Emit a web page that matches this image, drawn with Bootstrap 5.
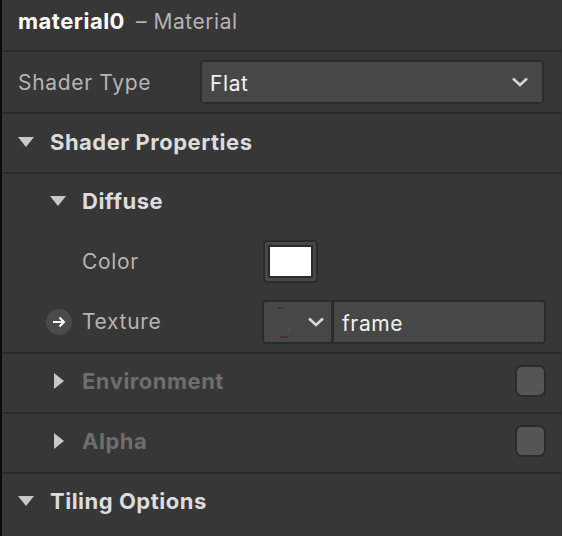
<!DOCTYPE html>
<html lang="en">
<head>
<meta charset="utf-8">
<title>Material</title>
<link rel="stylesheet" href="https://cdn.jsdelivr.net/npm/bootstrap@5.3.0/dist/css/bootstrap.min.css">
<style>
html, body { margin: 0; height: 536px; overflow: hidden; background: #373737; }
body { font-family: Inter, "Noto Sans", sans-serif; font-size: 21px; color: #bcbcbc; }
.panel { height: 536px; border-left: 2px solid #0b0b0b; border-right: 1px solid #2f2f2f; background: #373737; }
.sect { border-bottom: 2px solid #2b2b2b; }
.head-row { height: 52px; padding: 0 0 8px 16px; }
.row-top { height: 58px; padding-bottom: 4px; }
.row-a { height: 60px; }
.row-s { height: 62px; }
.row-b { height: 60px; padding-bottom: 2px; }
.row-c { height: 60px; padding-bottom: 4px; }
.row-d { height: 60px; padding-bottom: 6px; }
.obj-name { font-weight: 700; color: #fff; letter-spacing: .5px; font-size: 22px; line-height: 1; }
.obj-kind { color: #b4b4b4; margin-left: 11px; letter-spacing: .55px; font-size: 21px; line-height: 1; }
.lbl { letter-spacing: .68px; color: #b4b4b4; line-height: 1; }
.lift { margin-bottom: 2px; }
.ttl { font-weight: 700; letter-spacing: .5px; font-size: 22px; color: #dcdcdc; line-height: 1; }
.ttl-off { color: #6e6e6e; }
.caret-slot { width: 32px; flex: none; }
.pad-1 { padding-left: 16px; }
.pad-2 { padding-left: 48px; }
.tri-down { display: block; width: 0; height: 0; border-left: 8px solid transparent; border-right: 8px solid transparent; border-top: 10px solid #c8c8c8; }
.tri-right { display: block; margin-left: 4px; width: 0; height: 0; border-top: 8px solid transparent; border-bottom: 8px solid transparent; border-left: 10px solid #c8c8c8; }
.field { height: 44px; background: #474747; border: 2px solid #2b2b2b; border-radius: 4px; color: #f2f2f2; letter-spacing: .6px; }
.type-lbl { width: 182px; flex: none; }
.shader-box { width: 344px; padding: 0 13px 0 8px; }
.shader-val { padding-top: 3px; line-height: 1; }
.swatch-box { width: 55px; height: 43px; background: #474747; border: 2px solid #2b2b2b; border-radius: 4px; padding: 3px; margin: 0 243px 2px 0; }
.swatch-fill { height: 100%; background: #fff; border: 2px solid #2b2b2b; }
.tex-wrap { width: 284px; margin-right: 15px; }
.tex-thumb { width: 70px; height: 100%; border-right: 3px solid #2b2b2b; flex: none; padding: 0 6px 0 8px; }
.tex-name { padding: 2px 0 0 8px; line-height: 1; }
.pin { width: 26px; height: 26px; border-radius: 50%; background: #4b4b4b; left: 44px; top: 50%; transform: translateY(-50%); }
.tick { width: 31px; height: 32px; background: #555; border: 2px solid #2b2b2b; border-radius: 7px; margin-right: 15px; }
</style>
</head>
<body>
<div class="panel d-flex flex-column">
  <div class="sect head-row d-flex align-items-center">
    <div class="d-flex align-items-baseline">
      <span class="obj-name">material0</span><span class="obj-kind">– Material</span>
    </div>
  </div>
  <div class="sect row-s d-flex align-items-center pad-1">
    <span class="lbl type-lbl">Shader Type</span>
    <div class="field shader-box d-flex align-items-center justify-content-between">
      <span class="shader-val">Flat</span>
      <svg width="18" height="12" viewBox="0 0 18 12"><path d="M2 2.500 9 9l7-6.500" fill="none" stroke="#d6d6d6" stroke-width="2.600"/></svg>
    </div>
  </div>
  <div class="sect row-b d-flex align-items-center pad-1">
    <div class="caret-slot"><span class="tri-down"></span></div>
    <span class="ttl">Shader Properties</span>
  </div>
  <div class="sect">
    <div class="row-top d-flex align-items-center pad-2">
      <div class="caret-slot"><span class="tri-down"></span></div>
      <span class="ttl">Diffuse</span>
    </div>
    <div class="row-a d-flex align-items-center pad-2">
      <div class="caret-slot"></div>
      <span class="lbl lift">Color</span>
      <div class="swatch-box ms-auto"><div class="swatch-fill"></div></div>
    </div>
    <div class="row-a d-flex align-items-center pad-2 position-relative">
      <span class="pin position-absolute d-flex align-items-center justify-content-center">
        <svg width="14" height="12" viewBox="0 0 14 12"><path d="M1 6h11M7.500 1.500 12 6l-4.500 4.500" fill="none" stroke="#fff" stroke-width="2"/></svg>
      </span>
      <div class="caret-slot"></div>
      <span class="lbl lift">Texture</span>
      <div class="field tex-wrap ms-auto d-flex align-items-center">
        <div class="tex-thumb d-flex align-items-center justify-content-between">
          <svg width="20" height="34" viewBox="0 0 20 34"><path d="M3 3h2" stroke="#8a3a28" stroke-width="1"/><path d="M5 3h6" stroke="#2e2e2e" stroke-width="1"/><path d="M17 22v5" stroke="#8a3a28" stroke-width="1"/><path d="M1 32h6" stroke="#8a3a28" stroke-width="1"/><path d="M8 32h8" stroke="#2a2a2a" stroke-width="1"/></svg>
          <svg width="18" height="12" viewBox="0 0 18 12"><path d="M2 2.500 9 9l7-6.500" fill="none" stroke="#d6d6d6" stroke-width="2.600"/></svg>
        </div>
        <span class="tex-name">frame</span>
      </div>
    </div>
  </div>
  <div class="sect row-c d-flex align-items-center pad-2">
    <div class="caret-slot"><span class="tri-right"></span></div>
    <span class="ttl ttl-off">Environment</span>
    <span class="tick ms-auto"></span>
  </div>
  <div class="sect row-c d-flex align-items-center pad-2">
    <div class="caret-slot"><span class="tri-right"></span></div>
    <span class="ttl ttl-off">Alpha</span>
    <span class="tick ms-auto"></span>
  </div>
  <div class="row-d d-flex align-items-center pad-1">
    <div class="caret-slot"><span class="tri-down"></span></div>
    <span class="ttl">Tiling Options</span>
  </div>
</div>
</body>
</html>
